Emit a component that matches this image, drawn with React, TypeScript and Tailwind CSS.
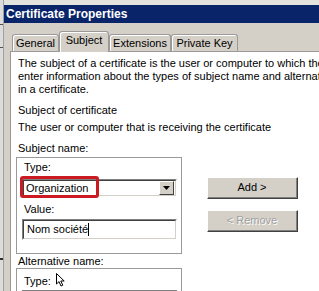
import React from 'react';

const font = "font-['Liberation_Sans',Arial,sans-serif]";

const Tab = ({ label, width, selected }: { label: string; width: string; selected?: boolean }) => (
  <div
    className={`${width} flex items-center justify-center rounded-t-[3px] border-t border-l border-r bg-[#d4d0c8] text-[11px] text-black ${
      selected
        ? 'relative z-10 h-[21px] -mb-px border-[#9a9a9a] pb-[3px]'
        : 'h-[17px] border-[#9a9a9a] pt-px'
    }`}
    style={{ boxShadow: 'inset 1px 1px 0 #ffffff' }}
  >
    {label}
  </div>
);

const Sunken = ({ children, className }: { children: React.ReactNode; className?: string }) => (
  <div className={`border-t border-l border-[#808080] border-b border-r border-b-white border-r-white ${className ?? ''}`}>
    <div className="h-full border-t border-l border-[#404040] border-b border-r border-b-[#d4d0c8] border-r-[#d4d0c8] bg-white flex items-center">
      {children}
    </div>
  </div>
);

const Button = ({ label, disabled }: { label: string; disabled?: boolean }) => (
  <div className="w-[91px] h-[22px] border-r border-b border-[#404040] border-t border-l border-t-white border-l-white bg-[#d4d0c8]">
    <div className="h-full border-r border-b border-[#808080] flex items-center justify-center text-[11px]">
      {disabled ? (
        <span className="text-[#a0a0a0] [text-shadow:1px_1px_0_#ffffff]">{label}</span>
      ) : (
        <span className="text-black">{label}</span>
      )}
    </div>
  </div>
);

const Cursor = () => (
  <svg width="10" height="14" viewBox="0 0 10 14" className="absolute left-[39px] top-[4px]">
    <path d="M0.5 0.5 L0.5 11 L3 8.6 L5 13 L6.8 12.2 L4.8 8 L8.2 8 Z" fill="#ffffff" stroke="#000000" strokeWidth="1" />
  </svg>
);

export default function App() {
  return (
    <div className={`w-[319px] h-[291px] overflow-hidden flex bg-[#d4d0c8] ${font}`}>
      {/* window behind */}
      <div className="w-[3px] shrink-0 bg-[#dcdcdc] flex flex-col">
        <div className="h-[24px]" />
        <div className="h-px bg-[#505050]" />
        <div className="h-[22px]" />
        <div className="h-px bg-[#505050]" />
        <div className="h-[210px]" />
        <div className="h-[2px] bg-[#303030]" />
      </div>
      <div className="w-px shrink-0 bg-[#a0a0a0]" />

      <div className="flex-1 flex flex-col min-w-0">
        <div className="h-[5px] bg-[#e4e2dc]" />
        <div className="h-[18px] bg-[#0a246a] text-white font-bold text-[12px] leading-[18px] pl-[2px] whitespace-nowrap">
          Certificate Properties
        </div>

        <div className="flex-1 flex flex-col pl-[6px] pt-[8px] min-h-0">
          <div className="flex items-end h-[20px] pl-[2px]">
            <Tab label="General" width="w-[47px]" />
            <Tab label="Subject" width="w-[50px]" selected />
            <Tab label="Extensions" width="w-[62px]" />
            <Tab label="Private Key" width="w-[67px]" />
          </div>

          <div className="flex-1 bg-white border-t border-l border-[#9a9a9a] pl-[7px] pt-[5px] text-[11px] text-black whitespace-nowrap overflow-hidden">
            <div className="leading-[13px]">
              The subject of a certificate is the user or computer to which the certificate is issued. You can
              <br />
              enter information about the types of subject name and alternative name values that can be used
              <br />
              in a certificate.
            </div>
            <div className="leading-[13px] mt-[8px]">Subject of certificate</div>
            <div className="leading-[13px] mt-[4px]">The user or computer that is receiving the certificate</div>

            <div className="flex mt-[8px]">
              <div className="w-[166px] shrink-0 -ml-[2px]">
                <div className="leading-[13px] pl-[2px]">Subject name:</div>
                <div className="mt-[2px] h-[97px] border border-[#9a9a9a] pl-[5px] pt-[3px]">
                  <div className="leading-[13px] pl-[2px]">Type:</div>
                  <div className="relative mt-[5px] w-[155px]">
                    <Sunken className="h-[18px]">
                      <span className="flex-1 pl-[2px]">Organization</span>
                      <div className="w-[15px] h-[14px] mr-px bg-[#d4d0c8] border-t border-l border-white border-b border-r border-b-[#404040] border-r-[#404040] flex items-center justify-center">
                        <svg width="7" height="4" viewBox="0 0 7 4">
                          <path d="M0 0 H7 L3.5 4 Z" fill="#000000" />
                        </svg>
                      </div>
                    </Sunken>
                    <div className="absolute left-[-2px] top-[-3px] w-[79px] h-[22px] border-[3px] border-[#cc1a22] rounded-[3px]" />
                  </div>
                  <div className="leading-[13px] pl-[2px] mt-[6px]">Value:</div>
                  <Sunken className="mt-[3px] w-[155px] h-[21px]">
                    <span className="pl-[3px]">Nom société</span>
                    <span className="w-px h-[13px] bg-black" />
                  </Sunken>
                </div>
                <div className="leading-[13px] pl-[2px] mt-[1px]">Alternative name:</div>
                <div className="mt-[0px] h-[40px] border border-[#9a9a9a] pl-[5px] pt-[6px] relative">
                  <div className="leading-[13px] pl-[2px]">Type:</div>
                  <Cursor />
                  <div className="mt-[2px] w-[155px] h-[18px] border-t border-l border-[#808080]" />
                </div>
              </div>

              <div className="flex flex-col gap-[11px] pl-[25px] pt-[35px]">
                <Button label="Add >" />
                <Button label="< Remove" disabled />
              </div>
            </div>
          </div>
        </div>
      </div>
    </div>
  );
}
